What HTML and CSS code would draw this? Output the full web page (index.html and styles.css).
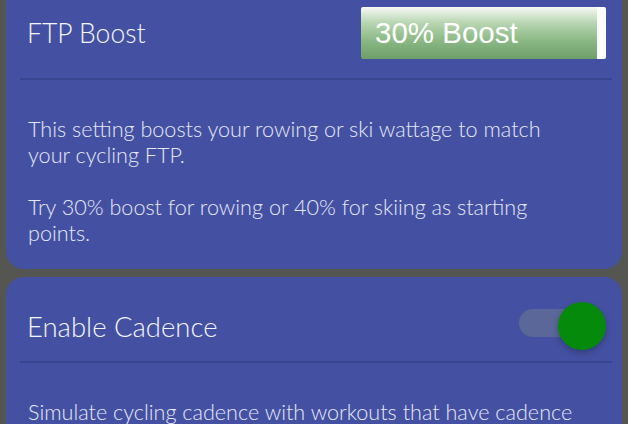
FILE: index.html
```html
<!DOCTYPE html>
<html lang="en">

<head>
    <meta charset="UTF-8">
    <meta name="viewport" content="width=device-width, initial-scale=1.0">
    <title>Settings</title>

    <link rel="stylesheet" href="styles.css">
</head>

<body>
    <div class="settings">

        <!-- FTP Boost -->
        <div class="card card-first">
            <div class="card-head">
                <h2>FTP Boost</h2>
                <div class="boost-select">
                    <span>30% Boost</span>
                    <span class="select-arrow"></span>
                </div>
            </div>
            <hr>
            <div class="card-body">
                <p>This setting boosts your rowing or ski wattage to match your cycling FTP.</p>
                <p>Try 30% boost for rowing or 40% for skiing as starting points.</p>
            </div>
        </div>

        <!-- Cadence -->
        <div class="card">
            <div class="card-head card-head-toggle">
                <h2 class="title-large">Enable Cadence</h2>
                <div class="toggle">
                    <span class="toggle-track"></span>
                    <span class="toggle-knob"></span>
                </div>
            </div>
            <hr>
            <div class="card-body">
                <p>Simulate cycling cadence with workouts that have cadence targets.</p>
            </div>
        </div>

    </div>
</body>

</html>
```

FILE: styles.css
```css
body {
    font-family: Lato, "Open Sans", sans-serif;
    margin: 0;
    padding: 0;
    background-color: #555552;
    color: #e4e7f4;
    overflow: hidden;
}

.settings {
    display: flex;
    flex-direction: column;
    gap: 8px;
    padding: 0 6px;
    margin-top: -20px;
}

.card {
    background: #4451a3;
    border-radius: 18px;
}

.card-head {
    display: flex;
    align-items: center;
    justify-content: space-between;
    padding: 27px 16px 19px 21px;
}

.card-head-toggle {
    padding: 25px 16px 11px 21px;
}

h2 {
    margin: 0;
    font-size: 26.5px;
    font-weight: 300;
    color: #f4f5fb;
}

.title-large {
    font-size: 27.5px;
}

hr {
    margin: 0 10px 0 14px;
    border: none;
    border-top: 2px solid #3a4592;
}

.card-body {
    padding: 36px 40px 23px 22px;
}

.card-body p {
    margin: 0 0 26px;
    font-size: 21.6px;
    font-weight: 300;
    line-height: 26px;
}

.card-body p:last-child {
    margin-bottom: 0;
}

.boost-select {
    display: flex;
    width: 245px;
    height: 52px;
    border-radius: 2px;
    overflow: hidden;
}

.boost-select span:first-child {
    flex: 1;
    display: flex;
    align-items: center;
    padding-left: 14px;
    font-family: "Liberation Sans", Arial, sans-serif;
    font-size: 29.5px;
    color: #fff;
    background: linear-gradient(to bottom, #f6faf4 0%, #b9d6b3 30%, #8ab884 65%, #6e9e6a 100%);
}

.select-arrow {
    width: 9px;
    background: #fdfdfd;
}

.toggle {
    position: relative;
    width: 87px;
    height: 48px;
}

.toggle-track {
    position: absolute;
    left: 0;
    top: 7px;
    width: 64px;
    height: 28px;
    border-radius: 14px;
    background: #5b6699;
}

.toggle-knob {
    position: absolute;
    right: 0;
    top: 0;
    width: 48px;
    height: 48px;
    border-radius: 50%;
    background: #068a0b;
    box-shadow: 0 3px 6px rgba(0, 0, 0, 0.25);
}
```
